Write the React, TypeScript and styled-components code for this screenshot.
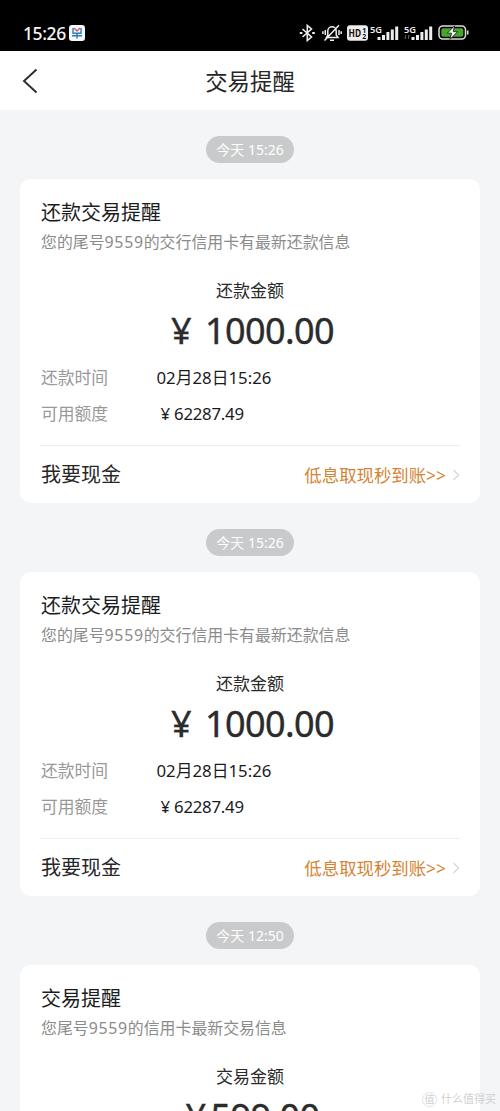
import React from "react";
import styled, { createGlobalStyle } from "styled-components";

const Global = createGlobalStyle`
  * { box-sizing: border-box; }
  body {
    margin: 0;
    background: #f4f5f7;
    font-family: "Noto Sans", "Noto Sans CJK SC", sans-serif;
    color: #1f1f1f;
  }
`;

const Screen = styled.div`
  position: relative;
  width: 500px;
  height: 1111px;
  overflow: hidden;
  background: #f4f5f7;
`;

const StatusBar = styled.div`
  display: flex;
  align-items: center;
  justify-content: space-between;
  height: 51px;
  padding: 14px 31px 0 23px;
  background: #000;
`;

const StatusGroup = styled.div`
  display: flex;
  align-items: center;
`;

const Glyph = styled.svg<{ $before?: number }>`
  display: block;
  flex: none;
  margin-left: ${(p) => p.$before ?? 0}px;
`;

const Clock = styled.span`
  margin-right: 3px;
  font-size: 17.5px;
  line-height: 20px;
  font-weight: 500;
  letter-spacing: -0.4px;
  color: #f4f4f4;
`;

const Header = styled.header`
  display: grid;
  grid-template-columns: 60px 1fr 60px;
  align-items: center;
  height: 59px;
  background: #fff;
`;

const BackIcon = styled.svg`
  display: block;
  margin-left: 22px;
`;

const Title = styled.h1`
  margin: 2px 0 0;
  text-align: center;
  font-size: 22.4px;
  line-height: 30px;
  font-weight: 400;
  color: #262626;
`;

const Feed = styled.main`
  display: flex;
  flex-direction: column;
  padding: 0 20px;
`;

const Stamp = styled.time`
  align-self: center;
  width: 88px;
  height: 27px;
  margin: 26px 0 16px;
  border-radius: 14px;
  background: #c9cacb;
  color: #fff;
  font-size: 14px;
  line-height: 28px;
  text-align: center;
  white-space: nowrap;
`;

const Card = styled.section`
  height: 324px;
  padding: 21px 20px 0;
  border-radius: 11px;
  background: #fff;
`;

const CardTitle = styled.h2`
  margin: 0;
  padding-left: 1px;
  font-size: 20px;
  line-height: 26px;
  font-weight: 400;
  color: #1c1c1c;
`;

const Note = styled.p`
  margin: 4px 0 0;
  padding-left: 1px;
  font-size: 15.9px;
  line-height: 24px;
  color: #8b8b8b;
`;

const Digits = styled.span<{ $gap: number }>`
  letter-spacing: ${(p) => p.$gap}px;
`;

const AmountLabel = styled.div`
  margin-top: 25px;
  text-align: center;
  font-size: 17px;
  line-height: 24px;
  color: #2a2a2a;
`;

const Amount = styled.div<{ $gap: number }>`
  display: flex;
  justify-content: center;
  gap: ${(p) => p.$gap}px;
  margin-top: 7px;
  padding-left: 5px;
  font-size: 36px;
  line-height: 42px;
  letter-spacing: -0.6px;
  -webkit-text-stroke: 0.4px #2b2b2b;
  color: #2b2b2b;
`;

const Details = styled.dl`
  display: grid;
  grid-template-columns: 115px 1fr;
  grid-auto-rows: 36px;
  align-items: center;
  margin: 7px 0 0;
  padding-left: 1px;
  font-size: 16.8px;
`;

const Term = styled.dt`
  color: #999;
`;

const Value = styled.dd`
  margin: 0;
  padding-left: 0.5px;
  color: #1b1b1d;
`;

const ActionRow = styled.div`
  display: flex;
  align-items: center;
  height: 58px;
  margin-top: 14px;
  border-top: 1px solid #efeff0;
`;

const ActionName = styled.span`
  flex: 1;
  padding-left: 1px;
  font-size: 20px;
  line-height: 28px;
  color: #262626;
`;

const ActionLink = styled.span`
  margin-right: 6px;
  font-size: 17.4px;
  line-height: 26px;
  color: #d58334;
`;

const Watermark = styled.div`
  position: absolute;
  right: 4px;
  bottom: 4px;
  display: flex;
  align-items: center;
  gap: 4px;
  font-size: 11px;
  line-height: 16px;
  color: #cfcfd1;
`;

const WatermarkBadge = styled.span`
  width: 15px;
  height: 15px;
  border: 1px solid #e2e2e4;
  border-radius: 50%;
  font-size: 10px;
  line-height: 13px;
  text-align: center;
`;

function AppBadge() {
  return (
    <Glyph width="16" height="16" viewBox="0 0 16 16" fill="none">
      <rect width="16" height="16" rx="3" fill="#f5f9fc" />
      <path d="M4 3v5.200h8V3M3 10.800h10M8 8v5.500" stroke="#2c7db8" strokeWidth="1.400" />
      <path d="M5 3l3 3 3-3" stroke="#d2556b" strokeWidth="1.400" />
    </Glyph>
  );
}

function Signal({ before, faint }: { before: number; faint?: boolean }) {
  return (
    <Glyph $before={before} width="30" height="20" viewBox="0 0 30 20">
      <text x="0" y="10" fill="#eee" fontFamily="Noto Sans" fontSize="9.500" fontWeight="600" textLength="12" lengthAdjust="spacingAndGlyphs">5G</text>
      <g fill="#eee">
        <rect x="7.500" y="14" width="3" height="3" />
        <rect x="12" y="12" width="3" height="5" />
        <rect x="16.400" y="9" width="3" height="8" />
        <rect x="20.800" y="6.500" width="3" height="10.500" />
        <rect x="25.200" y="3.500" width="3" height="13.500" />
      </g>
      {faint && <path d="M1.500 12v4M.5 14.500l1 1.500M4.500 16v-4l1 1.500" stroke="#555" fill="none" />}
    </Glyph>
  );
}

function StatusIcons() {
  return (
    <StatusGroup>
      <Glyph width="17" height="18" viewBox="0 0 17 18" fill="none" stroke="#eee" strokeWidth="1.600">
        <path d="M3.500 5l9 8L8.300 16.500v-15L12.500 5l-9 8" />
        <path d="M.8 9h2.600M13.200 9h2.600" strokeWidth="2.200" />
      </Glyph>
      <Glyph $before={6} width="20" height="18" viewBox="0 0 20 18" fill="none" stroke="#eee" strokeWidth="1.500">
        <path d="M4.500 13.500h11.500l-1.800-2.500V7a4.200 4.200 0 0 0-8.400 0v4zM8 16.200h4M17 1.200L2.500 16.500M3.300 6v5M.9 7.200v2.800M17 6v5M19.200 7.200v2.800" />
      </Glyph>
      <Glyph $before={5} width="21" height="18" viewBox="0 0 21 18">
        <rect width="21" height="15.500" y="1.300" rx="3" fill="#eee" />
        <g fill="#111" fontFamily="Noto Sans" fontWeight="700">
          <text x="1.500" y="13" fontSize="10.500" textLength="12.500" lengthAdjust="spacingAndGlyphs">HD</text>
          <text x="15.200" y="8.600" fontSize="7">1</text>
          <text x="15.200" y="15.200" fontSize="7">2</text>
        </g>
      </Glyph>
      <Signal before={2} />
      <Signal before={4} faint />
      <Glyph $before={4} width="31" height="15" viewBox="0 0 31 15">
        <rect x="1" y="1" width="26.500" height="13" rx="3.800" fill="none" stroke="#ddd" strokeWidth="1.500" />
        <rect x="3.300" y="3.200" width="22" height="8.600" rx="1.800" fill="#4aa52e" />
        <path d="M16.500 .8L9.300 8.200h4.200l-1.500 6.200 7.600-7.800h-4.300z" fill="#f2f2fa" stroke="#1c2a1a" strokeWidth=".9" />
        <path d="M29.700 5.500v4" stroke="#ddd" strokeWidth="1.600" />
      </Glyph>
    </StatusGroup>
  );
}

type Notice = {
  time: string;
  title: string;
  note: [string, string, string];
  label: string;
  amount: string;
  gap: number;
};

const repayment: Notice = {
  time: "15:26",
  title: "还款交易提醒",
  note: ["您的尾号", "9559", "的交行信用卡有最新还款信息"],
  label: "还款金额",
  amount: "1000.00",
  gap: 14,
};

const purchase: Notice = {
  time: "12:50",
  title: "交易提醒",
  note: ["您尾号", "9559", "的信用卡最新交易信息"],
  label: "交易金额",
  amount: "599.00",
  gap: 5,
};

function NoticeCard({ item }: { item: Notice }) {
  return (
    <>
      <Stamp>今天 {item.time}</Stamp>
      <Card>
        <CardTitle>{item.title}</CardTitle>
        <Note>
          {item.note[0]}
          <Digits $gap={0.7}>{item.note[1]}</Digits>
          {item.note[2]}
        </Note>
        <AmountLabel>{item.label}</AmountLabel>
        <Amount $gap={item.gap}>
          <span>¥</span>
          <span>{item.amount}</span>
        </Amount>
        <Details>
          <Term>还款时间</Term>
          <Value>02月28日15:26</Value>
          <Term>可用额度</Term>
          <Value>
            <Digits $gap={-0.25}>&nbsp;¥ 62287.49</Digits>
          </Value>
        </Details>
        <ActionRow>
          <ActionName>我要现金</ActionName>
          <ActionLink>低息取现秒到账&gt;&gt;</ActionLink>
          <svg width="8" height="12" viewBox="0 0 8 12" fill="none">
            <path d="M1.500 1l5 5-5 5" stroke="#d8d8da" strokeWidth="1.400" />
          </svg>
        </ActionRow>
      </Card>
    </>
  );
}

export default function App() {
  return (
    <>
      <Global />
      <Screen>
        <StatusBar>
          <StatusGroup>
            <Clock>15:26</Clock>
            <AppBadge />
          </StatusGroup>
          <StatusIcons />
        </StatusBar>
        <Header>
          <BackIcon width="17" height="26" viewBox="0 0 17 26" fill="none">
            <path d="M14.500 1.500L2 13l12.500 11.500" stroke="#2b2b2b" strokeWidth="1.900" />
          </BackIcon>
          <Title>交易提醒</Title>
        </Header>
        <Feed>
          <NoticeCard item={repayment} />
          <NoticeCard item={repayment} />
          <NoticeCard item={purchase} />
        </Feed>
        <Watermark>
          <WatermarkBadge>值</WatermarkBadge>
          什么值得买
        </Watermark>
      </Screen>
    </>
  );
}
